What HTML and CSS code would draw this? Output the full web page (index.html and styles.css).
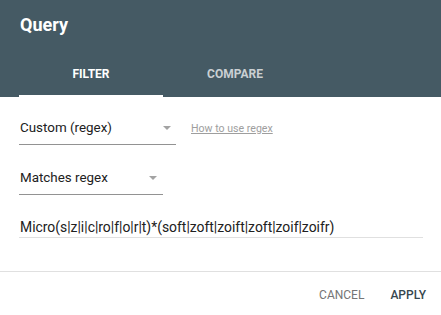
FILE: index.html
```html
<html>
  <link rel="stylesheet" href="styles.css">

  <head>
    <title>Query</title>
  </head>

  <body>
    <div class="dialog">
      <div class="dialog-header">
        <h1 class="dialog-title">Query</h1>
        <div class="tabs">
          <div class="tab active">FILTER</div>
          <div class="tab">COMPARE</div>
        </div>
      </div>

      <div class="dialog-body">
        <div class="field-row">
          <div class="select wide">
            <span class="select-value">Custom (regex)</span>
            <span class="select-arrow"></span>
          </div>
          <a class="help-link" href="#">How to use regex</a>
        </div>

        <div class="field-row second">
          <div class="select narrow">
            <span class="select-value">Matches regex</span>
            <span class="select-arrow"></span>
          </div>
        </div>

        <div class="text-input">Micro(s|z|i|c|ro|f|o|r|t)*(soft|zoft|zoift|zoft|zoif|zoifr)</div>
      </div>

      <div class="dialog-actions">
        <button class="btn btn-cancel">CANCEL</button>
        <button class="btn btn-apply">APPLY</button>
      </div>
    </div>
  </body>
</html>
```

FILE: styles.css
```css
html, body {
  margin: 0;
  background: #ffffff;
  font-family: Roboto, "Liberation Sans", Arial, sans-serif;
  color: #212121;
}
.dialog {
  width: 441px;
}
.dialog-header {
  background-color: #455A64;
  padding-top: 13px;
}
.dialog-title {
  margin: 0 0 12px 20px;
  font-size: 18px;
  line-height: 24px;
  font-weight: 700;
  color: #ffffff;
}
.tabs {
  display: flex;
  padding-left: 19px;
}
.tab {
  width: 144px;
  height: 48px;
  box-sizing: border-box;
  padding-top: 4px;
  display: flex;
  align-items: center;
  justify-content: center;
  font-size: 12px;
  font-weight: 700;
  color: rgba(255, 255, 255, 0.72);
  border-bottom: 2px solid transparent;
}
.tab.active {
  color: #ffffff;
  border-bottom-color: #ffffff;
}
.dialog-body {
  padding: 14px 18px 0 19px;
}
.field-row {
  display: flex;
  align-items: center;
}
.field-row.second {
  margin-top: 16px;
}
.select {
  height: 34px;
  box-sizing: border-box;
  border-bottom: 1px solid #929292;
  display: flex;
  align-items: center;
  justify-content: space-between;
  font-size: 13.4px;
  padding-left: 1px;
}
.select.wide {
  width: 157px;
}
.select.narrow {
  width: 144px;
}
.select-arrow {
  width: 0;
  height: 0;
  margin-right: 5px;
  border-left: 4px solid transparent;
  border-right: 4px solid transparent;
  border-top: 4px solid #a3a3a3;
}
.narrow .select-arrow {
  margin-right: 6px;
}
.help-link {
  margin-left: 15px;
  font-size: 10.6px;
  color: #9e9e9e;
  text-decoration: underline;
}
.text-input {
  margin-top: 21px;
  height: 22px;
  box-sizing: border-box;
  border-bottom: 1px solid #e0e0e0;
  padding-left: 1px;
  display: flex;
  align-items: center;
  font-size: 13.9px;
}
.dialog-actions {
  margin-top: 33px;
  border-top: 1px solid #e0e0e0;
  display: flex;
  justify-content: flex-end;
  gap: 10px;
  padding: 5px 7px 0 0;
}
.btn {
  height: 36px;
  padding: 0 8px;
  border: none;
  background: none;
  font-family: Roboto, "Liberation Sans", Arial, sans-serif;
  font-size: 12px;
}
.btn-cancel {
  color: #757575;
}
.btn-apply {
  color: #37474F;
  font-weight: 500;
}
```
